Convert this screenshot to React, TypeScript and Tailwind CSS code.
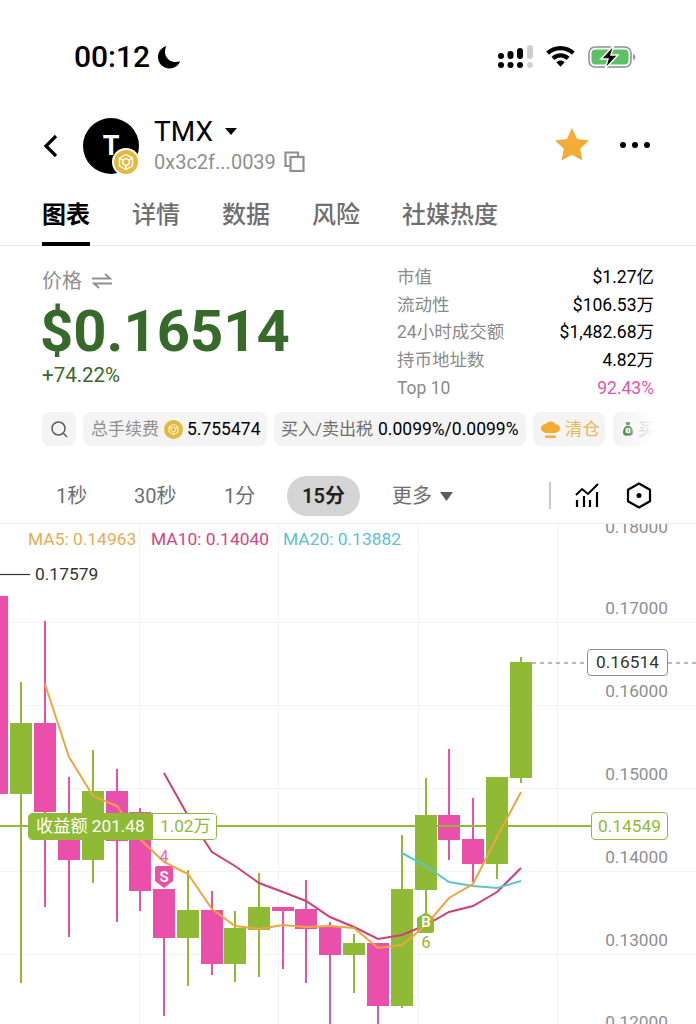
const FONT = "font-['Roboto','Noto_Sans_CJK_SC',sans-serif]";

// [x, bodyTop, bodyBottom, wickTop, wickBottom, up]
const candles: [number, number, number, number, number, boolean][] = [
  [-3, 596, 794, 596, 794, false],
  [21, 723, 794, 682, 983, true],
  [45, 723, 812, 621, 907, false],
  [69, 814, 860, 777, 937, false],
  [93, 791, 860, 750, 883, true],
  [117, 791, 841, 769, 922, false],
  [140, 812, 891, 808, 911, false],
  [164, 889, 938, 889, 1016, false],
  [188, 910, 938, 870, 986, true],
  [212, 910, 964, 891, 975, false],
  [235, 928, 964, 911, 982, true],
  [259, 907, 930, 873, 977, true],
  [283, 907, 911, 907, 969, false],
  [306, 909, 929, 880, 983, false],
  [330, 927, 955, 922, 1024, false],
  [354, 943, 955, 934, 993, true],
  [378, 943, 1006, 943, 1024, false],
  [402, 889, 1006, 835, 1008, true],
  [426, 815, 890, 778, 915, true],
  [449, 815, 840, 749, 860, false],
  [473, 839, 864, 798, 882, false],
  [497, 777, 864, 777, 879, true],
  [521, 662, 778, 657, 783, true],
];

const ma5 = "45,684 69,757 93,796 117,806 140,839 164,862 188,874 212,909 235,926 259,929 283,925 306,927 330,926 354,928 378,948 402,945 426,925 449,898 473,884 497,837 521,792";
const ma10 = "164,773 187,814 212,852 235,866 259,883 283,892 306,901 330,917 354,927 378,939 402,935 426,925 449,912 473,906 497,892 521,868";
const ma20 = "402,853 426,866 449,882 473,886 497,888 521,881";

const axis = [
  ["0.18000", 527],
  ["0.17000", 608],
  ["0.16000", 691],
  ["0.15000", 774],
  ["0.14000", 857],
  ["0.13000", 940],
  ["0.12000", 1022],
] as const;

const stats = [
  ["市值", "$1.27亿"],
  ["流动性", "$106.53万"],
  ["24小时成交额", "$1,482.68万"],
  ["持币地址数", "4.82万"],
  ["Top 10", "92.43%"],
];

function Bnb({ size, ring }: { size: number; ring?: boolean }) {
  return (
    <svg width={size} height={size} viewBox="0 0 28 28" className="block">
      {ring && <circle cx="14" cy="14" r="14" fill="#fff" />}
      <circle cx="14" cy="14" r={ring ? 12 : 14} fill="#e5b93c" />
      <g fill="none" stroke="#fff" strokeWidth="1.4" strokeLinejoin="round">
        <path d="M14 6.5l6.5 3.7v7.6L14 21.5l-6.5-3.7v-7.6z" />
        <path d="M10.8 12.2L14 10.4l3.2 1.8v3.6L14 17.6l-3.2-1.8z" />
        <path d="M7.5 10.2l3.3 2M20.5 10.2l-3.3 2M14 21.5v-3.9" />
      </g>
    </svg>
  );
}

function StatusBar() {
  return (
    <div className="h-[114px] flex items-start justify-between pt-[40px] pl-[74px] pr-[60px]">
      <div className="flex items-center gap-[7px]">
        <span className="text-[30px] leading-[34px] font-medium text-black">00:12</span>
        <svg width="25" height="25" viewBox="0 0 25 25">
          <path d="M9.5 1C4.6 2.3 1 6.7 1 12c0 6.4 5.2 11.5 11.5 11.5 4.800 0 9-2.900 10.700-7.200-1.300.5-2.700.8-4.200.8C12.600 17.100 8 12.500 8 6.700 8 4.600 8.500 2.600 9.500 1z" fill="#000" />
        </svg>
      </div>
      <div className="flex items-center gap-[13px] h-[34px]">
        <svg width="35" height="24" viewBox="0 0 35 24">
          <g fill="#000">
            <rect x="0" y="8" width="6" height="6" rx="3" />
            <rect x="9.500" y="6" width="6" height="8" rx="3" />
            <rect x="19" y="3" width="6" height="11" rx="3" />
            <circle cx="3" cy="20" r="3" />
            <circle cx="12.500" cy="20" r="3" />
            <circle cx="22" cy="20" r="3" />
          </g>
          <rect x="29" y="0" width="6" height="14" rx="3" fill="#cfcfcf" />
          <circle cx="32" cy="20" r="3" fill="#cfcfcf" />
        </svg>
        <svg width="29" height="22" viewBox="0 0 29 22">
          <path d="M14.500 0C9 0 4 2.100.2 5.600l2.900 3.100C6 5.900 10 4.200 14.500 4.200s8.500 1.700 11.400 4.500l2.900-3.100C25 2.100 20 0 14.500 0z" fill="#000" />
          <path d="M14.500 7.300c-3.500 0-6.600 1.300-9 3.500l2.900 3.100c1.600-1.500 3.700-2.400 6.100-2.400s4.500.9 6.100 2.400l2.900-3.100c-2.400-2.200-5.500-3.500-9-3.500z" fill="#000" />
          <path d="M14.500 14.600c-1.600 0-3 .6-4.100 1.600l4.100 4.600 4.100-4.600c-1.100-1-2.500-1.600-4.100-1.600z" fill="#000" />
        </svg>
        <svg width="48" height="24" viewBox="0 0 48 24">
          <rect x="1" y="2" width="42" height="20" rx="6" fill="none" stroke="#8e8e8e" strokeWidth="1.500" />
          <rect x="3.500" y="4.500" width="37" height="15" rx="4" fill="#5cc163" />
          <path d="M45 9c1.500.4 2.500 1.500 2.500 3s-1 2.600-2.500 3z" fill="#9a9a9a" />
          <path d="M26 0L13 14h7l-3 10 13-14h-7z" fill="#000" stroke="#fff" strokeWidth="1.500" />
        </svg>
      </div>
    </div>
  );
}

function Header() {
  return (
    <div className="h-[64px] flex items-center pl-[43px] pr-[47px]">
      <svg width="15" height="24" viewBox="0 0 15 24" className="shrink-0 mt-[-1px] mr-[1px]">
        <path d="M13 2L3 12l10 10" fill="none" stroke="#000" strokeWidth="3.200" />
      </svg>
      <div className="relative w-[56px] h-[56px] ml-[24px] rounded-full bg-black flex items-center justify-center shrink-0">
        <span className="text-white text-[27px] font-bold leading-none">T</span>
        <div className="absolute left-[29px] top-[30px]">
          <Bnb size={28} ring />
        </div>
      </div>
      <div className="ml-[15px] flex flex-col">
        <div className="flex items-center h-[28px]">
          <span className="text-[28px] leading-[28px] font-[450] text-black">TMX</span>
          <svg width="12" height="7" viewBox="0 0 12 7" className="ml-[12px]">
            <path d="M0 0h12L6 7z" fill="#000" />
          </svg>
        </div>
        <div className="flex items-center mt-[3px] h-[26px]">
          <span className="text-[20px] leading-[26px] text-[#8f8f8f]">0x3c2f...0039</span>
          <svg width="21" height="21" viewBox="0 0 21 21" className="ml-[8px]">
            <g fill="none" stroke="#8f8f8f" strokeWidth="2.200">
              <path d="M5.500 15H1.500V1.500H14V5" />
              <rect x="6.500" y="6" width="13" height="14" />
            </g>
          </svg>
        </div>
      </div>
      <svg width="34" height="33" viewBox="0 0 34 33" className="ml-auto mb-[3px]">
        <path d="M17 0l5.100 11 11.900 1.500-8.800 8.200 2.300 11.800L17 26.700 6.500 32.500l2.300-11.800L0 12.500 11.900 11z" fill="#f5ab38" />
      </svg>
      <div className="ml-[31px] mr-[-1px] mb-[2px] flex gap-[6px]">
        <span className="w-[6px] h-[6px] rounded-full bg-black" />
        <span className="w-[6px] h-[6px] rounded-full bg-black" />
        <span className="w-[6px] h-[6px] rounded-full bg-black" />
      </div>
    </div>
  );
}

function Tabs() {
  return (
    <div className="h-[68px] flex gap-[42px] px-[42px] border-b border-[#e8e8e8]">
      {["图表", "详情", "数据", "风险", "社媒热度"].map((t, i) => (
        <div key={t} className={"relative pt-[21px] text-[24px] leading-[32px] " + (i === 0 ? "font-bold text-black" : "font-medium text-[#6f6f6f]")}>
          {t}
          {i === 0 && <div className="absolute left-0 right-0 bottom-[-1px] h-[4px] bg-black" />}
        </div>
      ))}
    </div>
  );
}

function PriceBlock() {
  return (
    <div className="h-[166px] flex pl-[42px] pr-[42px]">
      <div className="flex-1 pt-[21px]">
        <div className="flex items-center gap-[10px] h-[28px]">
          <span className="text-[20px] leading-[28px] text-[#8f8f8f]">价格</span>
          <svg width="20" height="16" viewBox="0 0 20 16">
            <path d="M0 5.500h18L13 1M20 10.500H2L7 15" fill="none" stroke="#8f8f8f" strokeWidth="1.800" />
          </svg>
        </div>
        <div className="text-[58px] leading-[64px] font-bold text-[#37692a] mt-[4px] ml-[-2px]">$0.16514</div>
        <div className="text-[20.500px] leading-[26px] font-normal text-[#37692a] mt-[-1px]">+74.22%</div>
      </div>
      <div className="w-[257px] pt-[17px] flex flex-col">
        {stats.map(([k, v], i) => (
          <div key={k} className="h-[27.800px] flex items-center justify-between text-[17.500px]">
            <span className="text-[#8a8a8a]">{k}</span>
            <span className={i === 4 ? "text-[#e651a9]" : "text-black"}>{v}</span>
          </div>
        ))}
      </div>
    </div>
  );
}

function Chips() {
  return (
    <div className="relative h-[34px] ml-[42px] w-[612px] overflow-hidden flex gap-[7px] text-[17.500px] leading-[34px] whitespace-nowrap">
      <div className="w-[34px] h-[34px] shrink-0 rounded-[8px] bg-[#f4f4f4] flex items-center justify-center">
        <svg width="17" height="17" viewBox="0 0 17 17">
          <circle cx="7.500" cy="7.500" r="6.500" fill="none" stroke="#5c5c5c" strokeWidth="1.500" />
          <path d="M12 12l4 4" stroke="#5c5c5c" strokeWidth="1.500" />
        </svg>
      </div>
      <div className="w-[184px] shrink-0 rounded-[8px] bg-[#f4f4f4] flex items-center pl-[8px]">
        <span className="text-[17px] text-[#8f8f8f]">总手续费</span>
        <span className="ml-[5px]"><Bnb size={19} /></span>
        <span className="ml-[4px] text-black">5.755474</span>
      </div>
      <div className="w-[252px] shrink-0 rounded-[8px] bg-[#f4f4f4] flex items-center pl-[7px]">
        <span className="text-[17px] text-[#6f6f6f]">买入/卖出税</span>
        <span className="ml-[5px] text-black">0.0099%/0.0099%</span>
      </div>
      <div className="w-[72px] shrink-0 rounded-[8px] bg-[#f4f4f4] flex items-center pl-[8px]">
        <svg width="19" height="19" viewBox="0 0 19 19">
          <path d="M4.500 13C2 12.500 0 10.700 0 8.300 0 6 2 4.200 4.500 4.300 5.500 2.500 7.300 1.500 9.500 1.500s4 1 5 2.800c2.500-.1 4.500 1.700 4.500 4 0 2.400-2 4.200-4.500 4.700z" fill="#f4ab33" />
          <rect x="4" y="15.500" width="11" height="2.500" rx="1" fill="#f4ab33" />
        </svg>
        <span className="ml-[5px] text-[#ecb654]">清仓</span>
      </div>
      <div className="w-[60px] shrink-0 ml-[1px] rounded-[8px] bg-[#f4f4f4] flex items-center pl-[10px]">
        <svg width="14" height="20" viewBox="0 0 15 20">
          <path d="M4 0h7L9.500 4h-4zM5 5h5c3 2 5 6 5 10 0 3-2 5-4 5H4c-2 0-4-2-4-5 0-4 2-8 5-10z" fill="#3f7a35" />
          <rect x="4" y="9" width="7" height="7" rx="1" fill="#fff" />
          <path d="M7 10h1.500v5H7z" fill="#3f7a35" />
        </svg>
        <span className="ml-[5px] text-[#8f8f8f]">买入</span>
      </div>
      <div className="absolute right-0 top-0 bottom-0 w-[34px] bg-gradient-to-r from-white/0 to-white" />
    </div>
  );
}

function Intervals() {
  return (
    <div className="h-[48px] mt-[30px] border-b border-[#ececec] relative text-[20px] text-[#6f6f6f]">
      <div className="absolute left-[56px] top-0 h-[40px] leading-[40px]">1秒</div>
      <div className="absolute left-[134px] top-0 h-[40px] leading-[40px]">30秒</div>
      <div className="absolute left-[224px] top-0 h-[40px] leading-[40px]">1分</div>
      <div className="absolute left-[287px] top-0 w-[73px] h-[40px] rounded-full bg-[#d4d4d4] text-center font-semibold text-[#222] leading-[40px]">15分</div>
      <div className="absolute left-[392px] top-0 h-[40px] leading-[40px] flex items-center gap-[8px]">
        更多
        <svg width="13" height="9" viewBox="0 0 13 9"><path d="M0 0h13L6.500 9z" fill="#5c5c5c" /></svg>
      </div>
      <div className="absolute left-[549px] top-[6px] w-[1.500px] h-[27px] bg-[#c9c9c9]" />
      <svg width="24" height="25" viewBox="0 0 24 25" className="absolute left-[575px] top-[7px]">
        <path d="M1 12l6-6 6 5L23 1" fill="none" stroke="#000" strokeWidth="2" />
        <path d="M2 17v7M9 13v11M15 17v7M22 9v15" stroke="#000" strokeWidth="2.200" />
      </svg>
      <svg width="26" height="27" viewBox="0 0 26 27" className="absolute left-[626px] top-[6px]">
        <path d="M13 1.500l11 6.300v11.400l-11 6.300-11-6.300V7.800z" fill="none" stroke="#000" strokeWidth="2.200" strokeLinejoin="round" />
        <circle cx="13" cy="13.500" r="2.500" fill="#000" />
      </svg>
    </div>
  );
}

function Chart() {
  return (
    <div className="relative h-[500px] overflow-hidden">
      <svg width="696" height="500" viewBox="0 524 696 500" className="absolute inset-0">
        <g stroke="#f3f3f3" strokeWidth="1">
          {[622.500, 705.500, 788.500, 871.500, 954.500].map((y) => <line key={y} x1="0" x2="696" y1={y} y2={y} />)}
          {[139, 278, 418, 557].map((x) => <line key={x} x1={x + 0.5} x2={x + 0.5} y1="524" y2="1024" />)}
        </g>
        <line x1="0" x2="30" y1="574.500" y2="574.500" stroke="#333" strokeWidth="1.200" />
        {candles.map(([x, top, bottom, wt, wb, up]) => {
          const c = up ? "#8fba36" : "#ea50ab";
          return (
            <g key={x}>
              <line x1={x} x2={x} y1={wt} y2={wb} stroke={c} strokeWidth="2" />
              <rect x={x - 11} y={top} width="22" height={bottom - top} fill={c} />
            </g>
          );
        })}
        <line x1="0" x2="591" y1="826" y2="826" stroke="#8fba36" strokeWidth="2" />
        <line x1="532" x2="696" y1="663" y2="663" stroke="#777" strokeWidth="1" strokeDasharray="4 4" />
        <polyline points={ma10} fill="none" stroke="#cc3f78" strokeWidth="2" />
        <polyline points={ma20} fill="none" stroke="#5cc4cf" strokeWidth="2" />
        <path d="M155 868a2 2 0 0 1 2-2h14a2 2 0 0 1 2 2v13l-9 7-9-7z" fill="#ea50ab" />
        <path d="M426 912l8 6v13a2 2 0 0 1-2 2h-13a2 2 0 0 1-2-2v-13z" fill="#8fba36" />
        <polyline points={ma5} fill="none" stroke="#efa53f" strokeWidth="2" />
      </svg>

      <div className="absolute left-[28px] top-[5px] text-[17.400px] leading-[20px] text-[#e9aa58]">MA5: 0.14963</div>
      <div className="absolute left-[151px] top-[5px] text-[17.400px] leading-[20px] text-[#d6437d]">MA10: 0.14040</div>
      <div className="absolute left-[283px] top-[5px] text-[17.400px] leading-[20px] text-[#5dc0cf]">MA20: 0.13882</div>
      <div className="absolute left-[35px] top-[40px] text-[17.400px] leading-[20px] text-[#333]">0.17579</div>

      {axis.map(([v, y]) => (
        <div key={v} className="absolute right-[28px] text-[17.300px] leading-[20px] text-[#8f8f8f]" style={{ top: y - 524 - 10 }}>{v}</div>
      ))}

      <div className="absolute left-[587px] top-[125px] w-[81px] h-[27px] rounded-[4px] border border-[#8f8f8f] bg-white text-center text-[17.300px] leading-[25px] text-[#333]">0.16514</div>
      <div className="absolute left-[591px] top-[288px] w-[77px] h-[28px] rounded-[4px] border border-[#8fba36] bg-white text-center text-[17.300px] leading-[26px] text-[#8fba36]">0.14549</div>

      <div className="absolute left-[28px] top-[289px] h-[27px] w-[189px] flex rounded-[4px] overflow-hidden border border-[#8fba36] text-[17.200px] leading-[25px] whitespace-nowrap">
        <div className="w-[124px] bg-[#8fba36] text-white pl-[7px]">收益额 201.48</div>
        <div className="flex-1 bg-white text-[#8fba36] pl-[7px]">1.02万</div>
      </div>

      <div className="absolute left-[157px] top-[323px] w-[14px] text-center text-[16px] leading-[20px] text-[#e46cb4]">4</div>
      <div className="absolute left-[155px] top-[344px] w-[18px] text-center text-[15px] leading-[18px] font-semibold text-white">S</div>
      <div className="absolute left-[417px] top-[389px] w-[18px] text-center text-[15px] leading-[18px] font-semibold text-white">B</div>
      <div className="absolute left-[418px] top-[408px] w-[16px] text-center text-[17px] leading-[20px] text-[#8fba36]">6</div>
    </div>
  );
}

export default function App() {
  return (
    <div className={"w-[696px] h-[1024px] overflow-hidden bg-white " + FONT}>
      <StatusBar />
      <Header />
      <Tabs />
      <PriceBlock />
      <Chips />
      <Intervals />
      <Chart />
    </div>
  );
}
